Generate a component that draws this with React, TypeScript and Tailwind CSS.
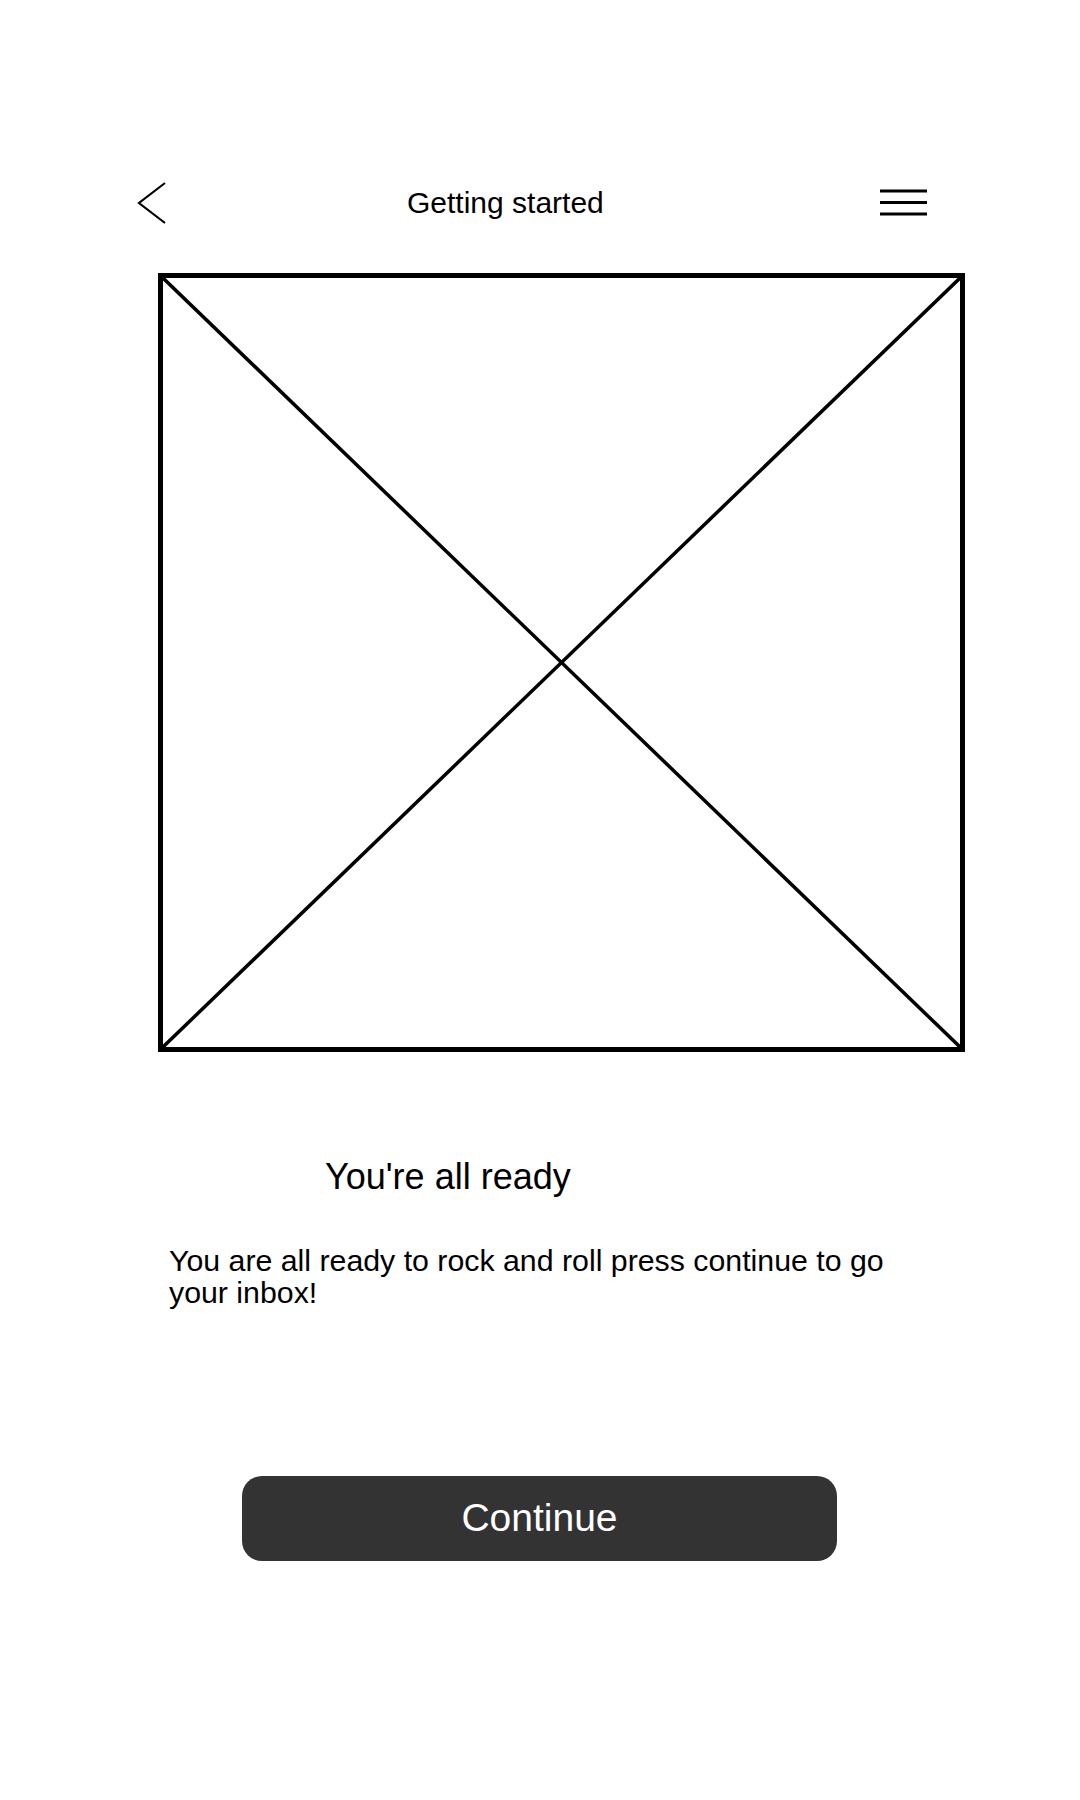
export default function App() {
  return (
    <div
      className="w-[1080px] h-[1800px] bg-white text-black flex flex-col"
      style={{ fontFamily: '"Liberation Sans", Arial, sans-serif' }}
    >
      {/* Header */}
      <div className="mt-[183px] h-[40px] flex items-center">
        <svg className="ml-[137px]" width="30" height="42" viewBox="0 0 30 42" fill="none">
          <polyline points="28,1 2,21 28,41" stroke="#000" strokeWidth="2.2" />
        </svg>
        <h1 className="ml-[240px] w-[200px] text-[30px] leading-[40px] whitespace-nowrap">Getting started</h1>
        <svg className="ml-[273px]" width="47" height="28" viewBox="0 0 47 28" fill="none">
          <line x1="0" y1="2" x2="47" y2="2" stroke="#000" strokeWidth="3" />
          <line x1="0" y1="13.5" x2="47" y2="13.5" stroke="#000" strokeWidth="3" />
          <line x1="0" y1="25" x2="47" y2="25" stroke="#000" strokeWidth="3" />
        </svg>
      </div>

      {/* Image placeholder */}
      <div className="mt-[50px] ml-[158px] w-[807px] h-[779px] border-[5px] border-black relative">
        <svg
          className="absolute inset-0 w-full h-full"
          viewBox="0 0 797 769"
          preserveAspectRatio="none"
          fill="none"
        >
          <line x1="0" y1="0" x2="797" y2="769" stroke="#000" strokeWidth="3.5" />
          <line x1="797" y1="0" x2="0" y2="769" stroke="#000" strokeWidth="3.5" />
        </svg>
      </div>

      <h2 className="mt-[107px] ml-[325px] text-[36px] leading-[36px] whitespace-nowrap">You're all ready</h2>

      <p className="mt-[50px] ml-[169px] w-[745px] text-[30.3px] leading-[32px]">
        You are all ready to rock and roll press continue to go your inbox!
      </p>

      <button className="mt-[167px] ml-[242px] w-[595px] h-[85px] rounded-[20px] bg-[#333333] text-white text-[39px] flex items-center justify-center">
        Continue
      </button>
    </div>
  );
}
